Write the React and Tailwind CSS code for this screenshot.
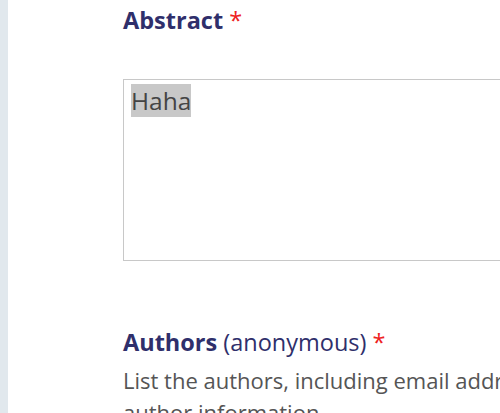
export default function App() {
  return (
    <div className="flex min-h-[413px] bg-white overflow-hidden" style={{ fontFamily: '"Open Sans", "Noto Sans", sans-serif' }}>
      <div className="w-[8px] shrink-0 bg-[#e1e8ed]" />
      <div className="flex-1 pl-[115px] pt-[4px]">
        {/* Abstract */}
        <h2 className="text-[23.5px] leading-[32px] font-bold text-[#2f2f6b]">
          Abstract <span className="text-[#ee2222] font-normal">*</span>
        </h2>
        <div className="mt-[43px] -mr-[40px] h-[182px] border border-[#c8c8c8] pl-[7px] pt-[4px]">
          <span className="text-[24.5px] leading-[34px] text-[#444] bg-[#c8c8c8]">Haha</span>
        </div>

        {/* Authors */}
        <h2 className="mt-[65px] text-[23.5px] leading-[32px] text-[#2f2f6b] whitespace-nowrap">
          <span className="font-bold">Authors</span> (anonymous){" "}
          <span className="text-[#ee2222]">*</span>
        </h2>
        <p className="mt-[6px] text-[22px] leading-[32px] text-[#555] whitespace-nowrap">
          List the authors, including email addresses and affiliations, and
          <br />
          author information.
        </p>
      </div>
    </div>
  );
}
